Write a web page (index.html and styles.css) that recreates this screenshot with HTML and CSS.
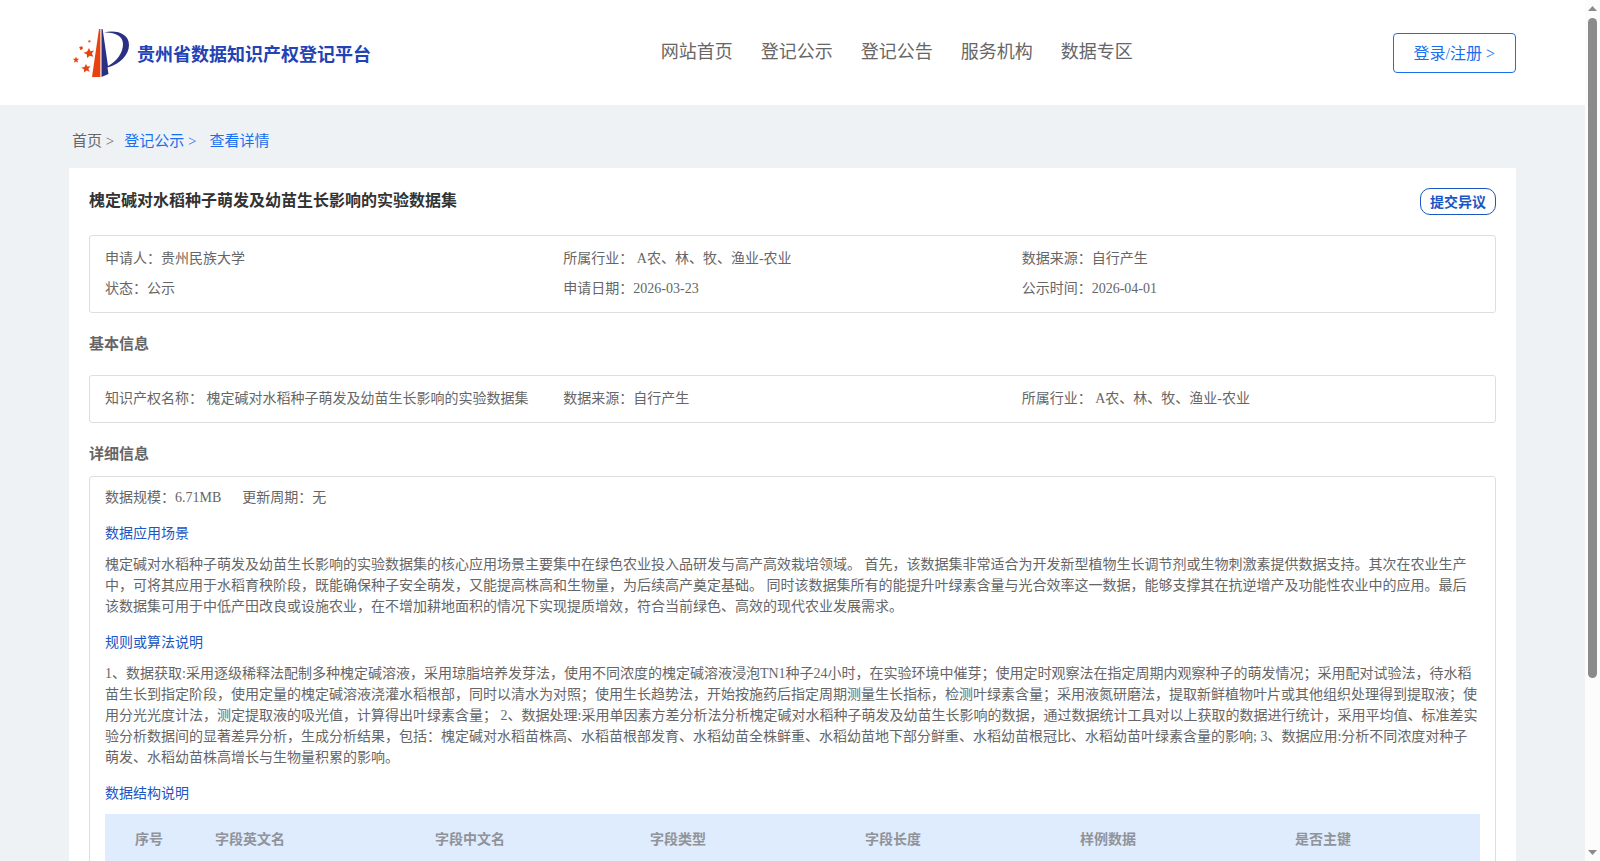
FILE: index.html
```html
<!DOCTYPE html>
<html lang="zh-CN">
<head>
  <meta charset="UTF-8" />
  <title>贵州省数据知识产权登记平台</title>
  <meta name="viewport" content="width=device-width, initial-scale=1.0"/>
  <link rel="stylesheet" href="styles.css">
</head>
<body>

<div class="page">
  <div class="content">
    <header class="header">
      <a class="logo" href="#">
        <svg width="58" height="50" viewBox="0 0 58 50" aria-hidden="true">
          <path fill="#e8430f" d="M27 1 L28.400 1 L28.400 49 L20 49 Z"/>
          <path fill="#2a3185" d="M29.500 1 L30.600 1 L36 38 C45 33 51 25 51 16 C51 8 43 4 32 4.500 C45 1.500 57 6 57 17 C57 27 48 36 35.500 39.500 L36.500 46 L29.500 49 Z"/>
          <g fill="#e8430f">
            <path d="M17 20l1.500 3.200 3.500-.6-2.200 2.900 1.600 3.300-3.600-1.100-2.800 2.400-.1-3.700-3.300-1.700 3.600-1.100z"/>
            <path d="M4 28.500l.9 2.200 2.400.1-1.900 1.500.6 2.400-2-1.300-2 1.300.6-2.400-2-1.500 2.500-.1z"/>
            <path d="M14 36l1.300 2.600 3.200-.3-2.100 2.400 1.200 3-3-1.200-2.500 2-.1-3.200-2.900-1.600 3.300-.8z"/>
            <path d="M7.200 19l3.300-.8.300 2.600-2.200 1.400z"/>
            <path d="M16 12.800l2.300-.5.300 1.800-1.900.3z"/>
          </g>
        </svg>
        <span>贵州省数据知识产权登记平台</span>
      </a>
      <nav class="nav">
        <a href="#">网站首页</a>
        <a href="#">登记公示</a>
        <a href="#">登记公告</a>
        <a href="#">服务机构</a>
        <a href="#">数据专区</a>
      </nav>
      <button class="login-btn" type="button">登录/注册 &gt;</button>
    </header>

    <nav class="breadcrumb">
      <a class="home" href="#">首页 &gt;</a>
      <a href="#">登记公示 &gt;</a>
      <a class="current" href="#">查看详情</a>
    </nav>

    <main class="card">
      <div class="card-top">
        <h1>槐定碱对水稻种子萌发及幼苗生长影响的实验数据集</h1>
        <button class="objection-btn" type="button">提交异议</button>
      </div>

      <div class="info-box">
        <span>申请人：贵州民族大学</span>
        <span>所属行业： A农、林、牧、渔业-农业</span>
        <span>数据来源：自行产生</span>
        <span>状态：公示</span>
        <span>申请日期：2026-03-23</span>
        <span>公示时间：2026-04-01</span>
      </div>

      <h2 class="basic-title">基本信息</h2>
      <div class="info-box">
        <span>知识产权名称： 槐定碱对水稻种子萌发及幼苗生长影响的实验数据集</span>
        <span>数据来源：自行产生</span>
        <span>所属行业： A农、林、牧、渔业-农业</span>
      </div>

      <h2 class="detail-title">详细信息</h2>
      <div class="detail-box">
        <div class="scale">
          <span>数据规模：6.71MB</span>
          <span>更新周期：无</span>
        </div>

        <h3>数据应用场景</h3>
        <p>槐定碱对水稻种子萌发及幼苗生长影响的实验数据集的核心应用场景主要集中在绿色农业投入品研发与高产高效栽培领域。 首先，该数据集非常适合为开发新型植物生长调节剂或生物刺激素提供数据支持。其次在农业生产中，可将其应用于水稻育秧阶段，既能确保种子安全萌发，又能提高株高和生物量，为后续高产奠定基础。 同时该数据集所有的能提升叶绿素含量与光合效率这一数据，能够支撑其在抗逆增产及功能性农业中的应用。最后该数据集可用于中低产田改良或设施农业，在不增加耕地面积的情况下实现提质增效，符合当前绿色、高效的现代农业发展需求。</p>

        <h3>规则或算法说明</h3>
        <p>1、数据获取:采用逐级稀释法配制多种槐定碱溶液，采用琼脂培养发芽法，使用不同浓度的槐定碱溶液浸泡TN1种子24小时，在实验环境中催芽；使用定时观察法在指定周期内观察种子的萌发情况；采用配对试验法，待水稻苗生长到指定阶段，使用定量的槐定碱溶液浇灌水稻根部，同时以清水为对照；使用生长趋势法，开始按施药后指定周期测量生长指标，检测叶绿素含量；采用液氮研磨法，提取新鲜植物叶片或其他组织处理得到提取液；使用分光光度计法，测定提取液的吸光值，计算得出叶绿素含量； 2、数据处理:采用单因素方差分析法分析槐定碱对水稻种子萌发及幼苗生长影响的数据，通过数据统计工具对以上获取的数据进行统计，采用平均值、标准差实验分析数据间的显著差异分析，生成分析结果，包括：槐定碱对水稻苗株高、水稻苗根部发育、水稻幼苗全株鲜重、水稻幼苗地下部分鲜重、水稻幼苗根冠比、水稻幼苗叶绿素含量的影响; 3、数据应用:分析不同浓度对种子萌发、水稻幼苗株高增长与生物量积累的影响。</p>

        <h3>数据结构说明</h3>
        <table>
          <thead>
            <tr>
              <th class="col-index">序号</th>
              <th class="col-name">字段英文名</th>
              <th>字段中文名</th>
              <th>字段类型</th>
              <th>字段长度</th>
              <th>样例数据</th>
              <th>是否主键</th>
            </tr>
          </thead>
        </table>
      </div>
    </main>
  </div>

  <div class="scrollbar" aria-hidden="true">
    <svg width="9" height="5" viewBox="0 0 9 5"><path d="M4.500 0 L9 5 H0 Z"/></svg>
    <div class="track"><div class="thumb"></div></div>
    <svg width="9" height="5" viewBox="0 0 9 5"><path d="M0 0 H9 L4.500 5 Z"/></svg>
  </div>
</div>

</body>
</html>
```
FILE: styles.css
```css
* {
  box-sizing: border-box;
}

body {
  margin: 0;
  font-family: "Liberation Serif", "Noto Sans CJK SC", serif;
  font-size: 14px;
  color: #666;
}

a {
  color: inherit;
  text-decoration: none;
}

button {
  font-family: inherit;
  background: #fff;
  cursor: pointer;
}

h1, h2, h3, p {
  margin: 0;
}

.page {
  display: flex;
  height: 100vh;
}

.content {
  flex: 1;
  min-width: 0;
  overflow-y: auto;
  scrollbar-width: none;
  background: #eef2f5;
}

/* header */
.header {
  display: flex;
  align-items: center;
  justify-content: space-between;
  height: 105px;
  padding: 0 69px;
  background: #fff;
}

.logo {
  display: flex;
  align-items: center;
  gap: 7px;
  padding-left: 3px;
  font-size: 18px;
  font-weight: bold;
  color: #2243b6;
}

.nav {
  display: flex;
  gap: 28px;
  padding: 0 0 5px 30px;
  font-size: 18px;
  color: #666;
}

.login-btn {
  height: 40px;
  padding: 0 20px 2px;
  border: 1px solid #1a6fee;
  border-radius: 4px;
  font-size: 16px;
  color: #1a6fee;
}

/* breadcrumb */
.breadcrumb {
  display: flex;
  height: 63px;
  padding: 8px 72px 0;
  line-height: 56px;
  font-size: 15px;
  gap: 10px;
  color: #1a6fee;
}

.breadcrumb .home {
  color: #666;
}

.breadcrumb .current {
  margin-left: 3px;
}

/* card */
.card {
  margin: 0 69px;
  padding: 20px;
  background: #fff;
}

.card-top {
  display: flex;
  align-items: flex-start;
  justify-content: space-between;
  height: 47px;
}

.card-top h1 {
  font-size: 16px;
  line-height: 25px;
  color: #333;
}

.objection-btn {
  height: 27px;
  padding: 0 9px 2px;
  border: 1px solid #1a56c4;
  border-radius: 10px;
  font-size: 14px;
  font-weight: bold;
  color: #1a56c4;
}

.info-box {
  display: grid;
  grid-template-columns: repeat(3, 1fr);
  padding: 8px 15px;
  border: 1px solid #dcdfe0;
  border-radius: 3px;
  line-height: 30px;
}

h2 {
  font-size: 15px;
}

.basic-title {
  line-height: 62px;
}

.detail-title {
  padding-top: 10px;
  line-height: 43px;
}

.detail-box {
  padding: 6px 15px 40px;
  border: 1px solid #dcdfe0;
  border-radius: 3px;
}

.scale {
  display: flex;
  gap: 21px;
  line-height: 30px;
}

h3 {
  margin: 10px 0;
  font-size: 14px;
  font-weight: normal;
  line-height: 21px;
  color: #1a56c4;
}

p {
  margin-bottom: 15px;
  line-height: 21px;
}

table {
  width: 100%;
  table-layout: fixed;
  border-collapse: collapse;
}

th {
  height: 48px;
  padding: 0 0 0 30px;
  background: #dfecfe;
  text-align: left;
  color: #909399;
}

.col-index {
  width: 80px;
}

.col-name {
  width: 220px;
}

/* scrollbar */
.scrollbar {
  display: flex;
  flex-direction: column;
  align-items: center;
  gap: 7px;
  width: 15px;
  padding: 6px 0;
  background: #fcfcfc;
}

.scrollbar svg {
  fill: #8b8b8b;
}

.track {
  flex: 1;
}

.thumb {
  width: 9px;
  height: 80%;
  border-radius: 5px;
  background: #8b8b8b;
}
```
